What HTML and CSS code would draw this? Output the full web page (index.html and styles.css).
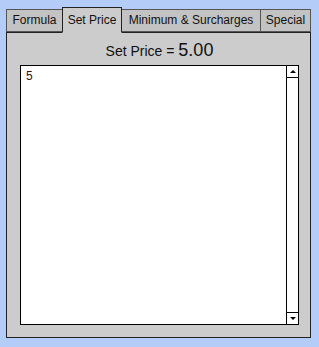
FILE: index.html
```html
<!DOCTYPE html>
<html lang="en">
<head>
    <meta charset="UTF-8">
    <title>Set Price</title>
    <link rel="stylesheet" href="styles.css">
</head>
<body>
    <div class="window">
        <div class="tabs">
            <div class="tab tab-formula">Formula</div>
            <div class="tab tab-set active">Set Price</div>
            <div class="tab tab-min">Minimum &amp; Surcharges</div>
            <div class="tab tab-special">Special</div>
        </div>
        <div class="panel">
            <div class="title">Set Price = <span class="amount">5.00</span></div>
            <div class="editor">
                <div class="editor-text">5</div>
                <div class="scrollbar">
                    <div class="arrow arrow-up"></div>
                    <div class="track"></div>
                    <div class="arrow arrow-down"></div>
                </div>
            </div>
        </div>
    </div>
</body>
</html>
```

FILE: styles.css
```css
body {
    margin: 0;
    background: #b4cdf8;
    font-family: 'Liberation Sans', Arial, sans-serif;
    font-size: 12px;
    color: #111;
}

.window {
    width: 305px;
    margin: 7px 0 0 6px;
}

.tabs {
    display: flex;
    align-items: flex-end;
    height: 25px;
    position: relative;
    z-index: 1;
}

.tab {
    box-sizing: border-box;
    height: 23px;
    line-height: 21px;
    text-align: center;
    background: #c3c3c3;
    border: 1px solid #555;
    border-right: none;
}

.tab.active {
    height: 26px;
    line-height: 24px;
    background: #cccccc;
    border-color: #222;
    border-bottom-color: #cccccc;
    border-right: 1px solid #222;
    margin-bottom: -1px;
}

.tab-formula { width: 56px; }
.tab-set { width: 60px; }
.tab-min { width: 138px; }
.tab-special { width: 51px; border-right: 1px solid #555; }

.active + .tab { border-left: none; }

.panel {
    box-sizing: border-box;
    height: 306px;
    background: #cccccc;
    border: 1px solid #222;
    padding: 0 11px 12px 13px;
    display: flex;
    flex-direction: column;
}

.title {
    height: 32px;
    line-height: 32px;
    text-align: center;
    font-size: 14px;
    padding-top: 1px;
    box-sizing: border-box;
}

.amount {
    font-size: 18px;
}

.editor {
    flex: 1;
    display: flex;
    background: #fff;
    border: 1px solid #000;
}

.editor-text {
    flex: 1;
    padding: 3px 5px;
    color: #3a1010;
}

.scrollbar {
    width: 11px;
    border-left: 1px solid #000;
    display: flex;
    flex-direction: column;
}

.arrow {
    height: 11px;
    display: flex;
    align-items: center;
    justify-content: center;
}

.arrow-up { border-bottom: 1px solid #000; }
.arrow-down { border-top: 1px solid #000; }

.arrow-up::before {
    content: "";
    border: 3px solid transparent;
    border-top: none;
    border-bottom: 3px solid #000;
}

.arrow-down::before {
    content: "";
    border: 3px solid transparent;
    border-bottom: none;
    border-top: 3px solid #000;
}

.track { flex: 1; }
```
